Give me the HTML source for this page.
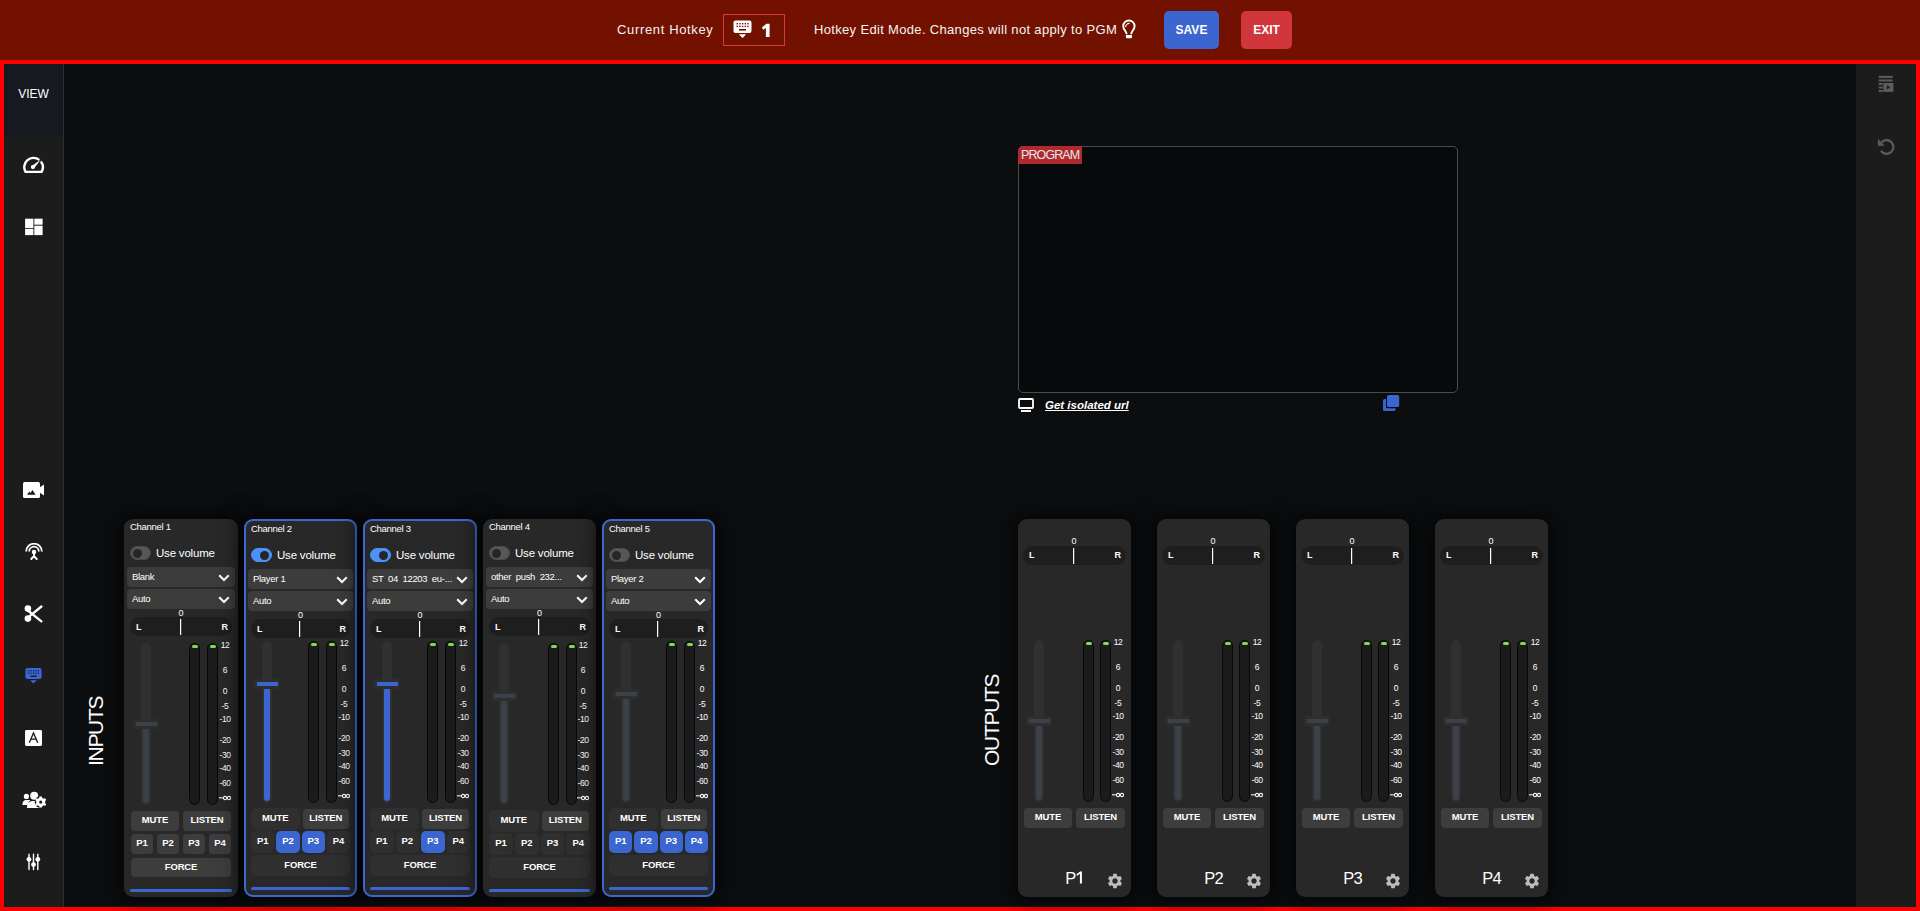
<!DOCTYPE html>
<html><head><meta charset="utf-8"><title>Hotkey edit</title><style>
*{margin:0;padding:0;box-sizing:border-box}
html,body{width:1920px;height:911px;overflow:hidden;background:#0b0d0f;font-family:"Liberation Sans", sans-serif;color:#fff}
.abs{position:absolute}
#top{position:absolute;left:0;top:0;width:1920px;height:60px;background:#721100}
#frame{position:absolute;left:0;top:60px;width:1920px;height:851px;border:4px solid #ff0000;background:#0b0d0f}
#lsb{position:absolute;left:4px;top:64px;width:60px;height:843px;background:#1c1c1c;border-right:1px solid #2f2f2f}
#view{position:absolute;left:0;top:0;width:59px;height:72px;background:#161a20;font-size:12px;text-align:center;line-height:60px}
#rsb{position:absolute;left:1856px;top:64px;width:60px;height:843px;background:#1c1c1c}
.card{position:absolute;background:#282828;border-radius:9px;box-shadow:0 0 20px 5px rgba(0,0,0,0.6)}
.card>*{position:absolute}
.card>.bd{left:0;top:0;width:100%;height:100%;border-radius:9px}
.clabel{font-size:9.5px;line-height:12px;color:#fff;letter-spacing:-0.3px}
.tog{width:21px;height:14px;border-radius:7px;background:#575757;border:1px solid #4a4a4a}
.tog i{position:absolute;left:2px;top:2px;width:9px;height:9px;border-radius:50%;background:#262626}
.tog.on{background:#4b92f8;border-color:#4b92f8}
.tog.on i{left:8px}
.usev{font-size:11.5px;line-height:14px;color:#fff;letter-spacing:-0.2px}
.sel{height:20px;background:#3c3c3c;border-radius:4px}
.sel>span{position:absolute;left:5px;top:4px;font-size:9.5px;line-height:12px;letter-spacing:-0.3px;white-space:nowrap}
.sel .chev{position:absolute;right:5px;top:7px}
.pan0{text-align:center;font-size:9px;line-height:10px}
.pan{height:19px;background:#1e1e1e;border-radius:10px}
.pan b{position:absolute;top:5px;font-size:9px;line-height:10px}
.pan .pl{left:6px} .pan .pr{right:4px}
.pan i{position:absolute;top:2px;width:1px;height:16px;background:#fff;box-shadow:0.4px 0 0 rgba(255,255,255,0.5)}
.ftrack{width:10px;background:#303030;border-radius:5px}
.ffill{width:6px;border-radius:0 0 3px 3px}
.fhandle{width:26px;height:10px;background:#2e2e2e;border-radius:3px}
.fhandle i{position:absolute;left:2.5px;top:2.5px;width:21px;height:4.5px}
.meter{width:11px;background:#1b1b1b;border-radius:6px;border:1px solid #080808}
.meter i{position:absolute;left:1.5px;top:1px;width:6.5px;height:3.2px;border-radius:2px;background:#7ddc55}
.scl{font-size:8.5px;line-height:10px;width:20px;text-align:center;letter-spacing:-0.4px}
.scl .dash{display:inline-block;width:3.5px;height:1.2px;background:#fff;vertical-align:3px;margin-right:0.5px}
.scl .inf{font-size:11px;line-height:10px;vertical-align:-0.5px}
.btn{height:20px;border-radius:4px;font-size:9.5px;font-weight:bold;line-height:18px;text-align:center;color:#fff;letter-spacing:-0.15px}
.bbar{height:3px;background:#3b66d0;border-radius:2px}
.oname{text-align:center;font-size:16.5px;line-height:16px;letter-spacing:-0.8px}
.vlabel{position:absolute;font-size:21px;line-height:21px;transform:rotate(-90deg);transform-origin:0 0;white-space:nowrap;letter-spacing:-1.3px}
</style></head>
<body>

<div id="top">
<div class="abs" style="left:617px;top:22px;font-size:13px;line-height:16px;color:#f4f4f4;letter-spacing:0.65px">Current Hotkey</div>
<div class="abs" style="left:723px;top:14px;width:62px;height:32px;border:1px solid #d43a3f"></div>
<svg style="position:absolute;left:733px;top:20px" width="19" height="18" viewBox="0 0 19 18">
<rect x="0.5" y="0.5" width="18" height="12.5" rx="2" fill="#ffffff"/>
<g fill="#721100">
<rect x="3.5" y="3" width="1.4" height="1.4"/><rect x="6.2" y="3" width="1.4" height="1.4"/><rect x="8.9" y="3" width="1.4" height="1.4"/><rect x="11.6" y="3" width="1.4" height="1.4"/><rect x="14.3" y="3" width="1.4" height="1.4"/>
<rect x="3.5" y="5.7" width="1.4" height="1.4"/><rect x="6.2" y="5.7" width="1.4" height="1.4"/><rect x="8.9" y="5.7" width="1.4" height="1.4"/><rect x="11.6" y="5.7" width="1.4" height="1.4"/><rect x="14.3" y="5.7" width="1.4" height="1.4"/>
<rect x="6" y="9" width="7" height="1.6"/>
</g>
<path d="M5.8 14.2 L13.2 14.2 L9.5 18 Z" fill="#ffffff"/>
</svg>
<svg class="abs" style="left:761px;top:23px" width="10" height="15" viewBox="0 0 10 15"><path d="M8.6 0.8 V14 H4.9 V4.9 L2.2 6.8 L0.9 4.5 L5.4 0.8 Z" fill="#fff"/></svg>
<div class="abs" style="left:814px;top:22px;font-size:13px;line-height:16px;color:#f4f4f4;letter-spacing:0.33px">Hotkey Edit Mode. Changes will not apply to PGM</div>
<svg class="abs" style="left:1122px;top:19px" width="14" height="20" viewBox="0 0 14 20">
<path d="M4.7 15.2 C4.7 12.6 1.2 10.6 1.2 7.2 A5.7 5.7 0 0 1 12.6 7.2 C12.6 10.6 9.1 12.6 9.1 15.2" fill="none" stroke="#fff" stroke-width="1.9"/>
<path d="M3.6 8.0 A3.9 3.9 0 0 1 7.6 4.3" fill="none" stroke="#fff" stroke-width="1.2"/>
<path d="M3.9 16 H10 V18.2 Q10 19.3 8.9 19.3 H5 Q3.9 19.3 3.9 18.2 Z" fill="#fff"/>
</svg>
<div class="abs" style="left:1164px;top:11px;width:55px;height:38px;border-radius:5px;background:#3c66cf;font-size:12px;font-weight:bold;line-height:38px;text-align:center">SAVE</div>
<div class="abs" style="left:1241px;top:11px;width:51px;height:38px;border-radius:5px;background:#d0363b;font-size:12px;font-weight:bold;line-height:38px;text-align:center">EXIT</div>
</div>

<div id="frame"></div>

<div id="lsb">
<div id="view">VIEW</div>
<!-- speedometer -->
<svg class="abs" style="left:18px;top:92px" width="24" height="18" viewBox="0 0 24 18">
<path d="M17.28 3.87 A9.3 9.3 0 0 0 3.53 15.9 L19.57 15.9 A9.3 9.3 0 0 0 18.88 5.47" fill="none" stroke="#fff" stroke-width="2.4" stroke-linejoin="round"/>
<path d="M12.1 12.3 L9.7 9.9 L18.6 3.7 Z" fill="#fff"/><circle cx="10.9" cy="11.1" r="2.1" fill="#fff"/>
</svg>
<!-- dashboard -->
<svg class="abs" style="left:21px;top:154px" width="18" height="18" viewBox="0 0 18 18">
<rect x="0.1" y="0.7" width="8.3" height="9.4" fill="#fff"/><rect x="0.1" y="10.9" width="8.3" height="6.2" fill="#fff"/>
<rect x="9.3" y="0.7" width="8.3" height="6" fill="#fff"/><rect x="9.3" y="7.7" width="8.3" height="9.4" fill="#fff"/>
</svg>
<!-- camera -->
<svg class="abs" style="left:19px;top:418px" width="22" height="17" viewBox="0 0 22 17">
<rect x="0" y="0" width="17" height="16" rx="1.6" fill="#fff"/>
<path d="M16.5 5.5 L21 2.5 L21 13.5 L16.5 10.5 Z" fill="#fff"/>
<path d="M4 12.8 L6.3 9.5 L7.4 10.9 L9.5 8 L12.6 12.8 Z" fill="#1c1c1c"/>
</svg>
<!-- antenna -->
<svg class="abs" style="left:21px;top:479px" width="18" height="17" viewBox="0 0 18 17">
<path d="M1.2 8.5 A7.8 7.8 0 0 1 16.8 8.5" fill="none" stroke="#fff" stroke-width="1.8"/>
<path d="M4.2 8.5 A4.8 4.8 0 0 1 13.8 8.5" fill="none" stroke="#fff" stroke-width="1.8"/>
<circle cx="9" cy="9" r="2.2" fill="#fff"/>
<path d="M9 9 L9 13 L6.3 16 M9 13 L11.7 16" fill="none" stroke="#fff" stroke-width="1.9" stroke-linecap="round"/>
</svg>
<!-- scissors -->
<svg class="abs" style="left:20px;top:541px" width="19" height="18" viewBox="0 0 19 18">
<circle cx="3.9" cy="3.6" r="3.3" fill="#fff"/><circle cx="3.9" cy="13.6" r="3.3" fill="#fff"/>
<path d="M4.5 6 L17.4 16.3 M6 10.8 L17.4 1.5" stroke="#fff" stroke-width="2.3" stroke-linecap="round"/>
</svg>
<!-- keyboard blue -->
<svg style="position:absolute;left:21px;top:603px" width="17" height="17" viewBox="0 0 19 18">
<rect x="0.5" y="0.5" width="18" height="12.5" rx="2" fill="#3b66d8"/>
<g fill="#1c1c1c">
<rect x="3.5" y="3" width="1.4" height="1.4"/><rect x="6.2" y="3" width="1.4" height="1.4"/><rect x="8.9" y="3" width="1.4" height="1.4"/><rect x="11.6" y="3" width="1.4" height="1.4"/><rect x="14.3" y="3" width="1.4" height="1.4"/>
<rect x="3.5" y="5.7" width="1.4" height="1.4"/><rect x="6.2" y="5.7" width="1.4" height="1.4"/><rect x="8.9" y="5.7" width="1.4" height="1.4"/><rect x="11.6" y="5.7" width="1.4" height="1.4"/><rect x="14.3" y="5.7" width="1.4" height="1.4"/>
<rect x="6" y="9" width="7" height="1.6"/>
</g>
<path d="M5.8 14.2 L13.2 14.2 L9.5 18 Z" fill="#3b66d8"/>
</svg>
<!-- A box -->
<svg class="abs" style="left:21px;top:666px" width="17" height="16" viewBox="0 0 17 16">
<rect x="0" y="0" width="17" height="16" rx="1.4" fill="#fff"/>
<path d="M4.3 12.8 L8.5 3 L12.7 12.8 M6 9.2 L11 9.2" fill="none" stroke="#1c1c1c" stroke-width="1.3"/>
</svg>
<!-- users cog -->
<svg class="abs" style="left:18px;top:727px" width="26" height="19" viewBox="0 0 26 19">
<circle cx="4.4" cy="5.4" r="2.6" fill="#fff"/>
<path d="M0.4 14 Q0.4 9 4.5 9 L8.5 9 Q5.5 11 5.6 14 Z" fill="#fff"/>
<circle cx="12.2" cy="4.7" r="4.0" fill="#fff"/>
<path d="M4.9 17 Q4.9 9.9 10.6 9.9 L14 9.9 Q17.5 10.2 17.5 17 Z" fill="#fff"/>
<g transform="translate(18.7 11.1) scale(1.2)"><circle r="5" fill="#1c1c1c"/>
<path d="M-1 -4.6 L1 -4.6 L1.3 -3.4 L2.6 -2.7 L3.7 -3.3 L4.6 -1.8 L3.7 -0.9 L3.7 0.9 L4.6 1.8 L3.7 3.3 L2.6 2.7 L1.3 3.4 L1 4.6 L-1 4.6 L-1.3 3.4 L-2.6 2.7 L-3.7 3.3 L-4.6 1.8 L-3.7 0.9 L-3.7 -0.9 L-4.6 -1.8 L-3.7 -3.3 L-2.6 -2.7 L-1.3 -3.4 Z" fill="#fff"/>
<circle r="1.3" fill="#1c1c1c"/></g>
</svg>
<!-- sliders -->
<svg class="abs" style="left:22px;top:789px" width="15" height="18" viewBox="0 0 15 18">
<path d="M3.0 1.2 V16.6 M7.5 1.2 V16.6 M11.8 1.2 V16.6" stroke="#fff" stroke-width="1.4" stroke-linecap="round"/>
<circle cx="3.0" cy="6.3" r="2.4" fill="#fff"/><circle cx="7.5" cy="11.6" r="2.4" fill="#fff"/><circle cx="11.8" cy="6.3" r="2.4" fill="#fff"/>
</svg>
</div>
<div id="rsb">
<svg class="abs" style="left:22px;top:11px" width="16" height="18" viewBox="0 0 16 18">
<rect x="0.7" y="0.9" width="14" height="2" fill="#5c5c5c"/><rect x="0.7" y="4.5" width="14" height="2" fill="#5c5c5c"/>
<rect x="0.7" y="8.0" width="4" height="2" fill="#5c5c5c"/><rect x="0.7" y="11.5" width="4" height="2" fill="#5c5c5c"/><rect x="0.7" y="15.0" width="4" height="2" fill="#5c5c5c"/>
<rect x="5.3" y="8.0" width="10.1" height="8.9" fill="#5c5c5c"/><path d="M8.9 10.3 L12.2 12.45 L8.9 14.6 Z" fill="#1c1c1c"/>
</svg>
<svg class="abs" style="left:21px;top:74px" width="19" height="18" viewBox="0 0 19 18">
<path d="M4.39 4.63 A6.8 6.8 0 1 1 4.03 12.9" fill="none" stroke="#5c5c5c" stroke-width="2.3"/>
<path d="M0.9 0.9 L0.9 7.8 L7.8 7.8 Z" fill="#5c5c5c"/>
</svg>
</div>


<div class="abs" style="left:1018px;top:146px;width:440px;height:247px;border:1px solid #4b4b4b;border-radius:5px;background:#060a0b"></div>
<div class="abs" style="left:1018px;top:146px;width:64px;height:18px;background:#b0292f;border-radius:5px 0 0 0;font-size:12.5px;line-height:18px;color:#e6e6e6;padding-left:3px;letter-spacing:-0.9px">PROGRAM</div>
<svg class="abs" style="left:1018px;top:398px" width="16" height="14" viewBox="0 0 16 14">
<rect x="1" y="1" width="14" height="9" rx="1" fill="none" stroke="#fff" stroke-width="1.8"/>
<rect x="3" y="12" width="10" height="2" fill="#fff"/>
</svg>
<div class="abs" style="left:1045px;top:397.5px;font-size:11.5px;line-height:14px;font-weight:bold;font-style:italic;text-decoration:underline;letter-spacing:0px">Get isolated url</div>
<svg class="abs" style="left:1383px;top:395px" width="17" height="17" viewBox="0 0 17 17">
<rect x="0" y="4" width="12.5" height="12" rx="1.5" fill="#3b66d0"/>
<rect x="3" y="-0.2" width="14" height="13.4" rx="1.5" fill="#0b0d0f"/>
<rect x="4" y="0" width="12.2" height="12" rx="1.5" fill="#3b66d0"/>
</svg>


<div class="vlabel" style="left:84.5px;top:766px">INPUTS</div>
<div class="vlabel" style="left:981px;top:766px">OUTPUTS</div>

<div class="card" style="left:124px;top:519px;width:114px;height:378px"><div class="bd" style=""></div>
<div class="clabel" style="left:6px;top:2px">Channel 1</div>
<div class="tog" style="left:6px;top:27px"><i></i></div>
<div class="usev" style="left:32px;top:26.5px">Use volume</div>
<div class="sel" style="left:3px;top:48px;width:108px"><span>Blank</span><svg class="chev" width="12" height="8" viewBox="0 0 12 8"><path d="M1.2 1.2 L6 6 L10.8 1.2" stroke="#fff" stroke-width="2.1" fill="none"/></svg></div>
<div class="sel" style="left:3px;top:70px;width:108px"><span>Auto</span><svg class="chev" width="12" height="8" viewBox="0 0 12 8"><path d="M1.2 1.2 L6 6 L10.8 1.2" stroke="#fff" stroke-width="2.1" fill="none"/></svg></div>
<div class="pan0" style="left:0;width:114px;top:89px">0</div>
<div class="pan" style="left:6px;top:98px;width:102px"><b class="pl">L</b><b class="pr">R</b><i style="left:50px"></i></div>
<div class="ftrack" style="left:17px;top:124px;height:162px"></div>
<div class="ffill" style="left:19px;top:209px;height:75px;background:#3c4048"></div>
<div class="fhandle" style="left:9px;top:200px"><i style="background:#3c4048"></i></div>
<div class="meter" style="left:65px;top:124px;height:162px"><i></i></div>
<div class="meter" style="left:83px;top:124px;height:162px"><i></i></div>
<div class="scl" style="left:91px;top:121.1px">12</div>
<div class="scl" style="left:91px;top:146.0px">6</div>
<div class="scl" style="left:91px;top:167.0px">0</div>
<div class="scl" style="left:91px;top:182.3px">-5</div>
<div class="scl" style="left:91px;top:195.3px">-10</div>
<div class="scl" style="left:91px;top:216.0px">-20</div>
<div class="scl" style="left:91px;top:231.3px">-30</div>
<div class="scl" style="left:91px;top:243.5px">-40</div>
<div class="scl" style="left:91px;top:258.8px">-60</div>
<svg style="left:95px;top:276px" width="13" height="6" viewBox="0 0 13 6"><rect x="0" y="2.3" width="3.8" height="1.05" fill="#fff"/><circle cx="6" cy="3" r="1.65" fill="none" stroke="#fff" stroke-width="1.05"/><circle cx="9.9" cy="3" r="1.65" fill="none" stroke="#fff" stroke-width="1.05"/></svg>
<div class="btn" style="left:7px;top:292px;width:48.0px;height:20px;line-height:18px;background:#3d3d3d;">MUTE</div>
<div class="btn" style="left:59.0px;top:292px;width:48.0px;background:#3d3d3d">LISTEN</div>
<div class="btn" style="left:7.0px;top:315px;width:22.0px;height:20px;line-height:18px;background:#3d3d3d;">P1</div>
<div class="btn" style="left:33.0px;top:315px;width:22.0px;height:20px;line-height:18px;background:#3d3d3d;">P2</div>
<div class="btn" style="left:59.0px;top:315px;width:22.0px;height:20px;line-height:18px;background:#3d3d3d;">P3</div>
<div class="btn" style="left:85.0px;top:315px;width:22.0px;height:20px;line-height:18px;background:#3d3d3d;">P4</div>
<div class="btn" style="left:7px;top:339px;width:100px;height:19px;line-height:17px;background:#3d3d3d;">FORCE</div>
<div class="bbar" style="left:6px;top:370px;width:102px"></div>
</div><div class="card" style="left:244px;top:519px;width:113px;height:378px"><div class="bd" style="border:2px solid #3c66d0;"></div>
<div class="clabel" style="left:7px;top:4px">Channel 2</div>
<div class="tog on" style="left:7px;top:29px"><i></i></div>
<div class="usev" style="left:33px;top:28.5px">Use volume</div>
<div class="sel" style="left:4px;top:50px;width:105px"><span>Player 1</span><svg class="chev" width="12" height="8" viewBox="0 0 12 8"><path d="M1.2 1.2 L6 6 L10.8 1.2" stroke="#fff" stroke-width="2.1" fill="none"/></svg></div>
<div class="sel" style="left:4px;top:72px;width:105px"><span>Auto</span><svg class="chev" width="12" height="8" viewBox="0 0 12 8"><path d="M1.2 1.2 L6 6 L10.8 1.2" stroke="#fff" stroke-width="2.1" fill="none"/></svg></div>
<div class="pan0" style="left:0;width:113px;top:91px">0</div>
<div class="pan" style="left:7px;top:100px;width:99px"><b class="pl">L</b><b class="pr">R</b><i style="left:48px"></i></div>
<div class="ftrack" style="left:18px;top:122px;height:162px"></div>
<div class="ffill" style="left:20px;top:169px;height:113px;background:#3b66d0"></div>
<div class="fhandle" style="left:10px;top:160px"><i style="background:#3b66d0"></i></div>
<div class="meter" style="left:64px;top:122px;height:162px"><i></i></div>
<div class="meter" style="left:82px;top:122px;height:162px"><i></i></div>
<div class="scl" style="left:90px;top:119.1px">12</div>
<div class="scl" style="left:90px;top:144.0px">6</div>
<div class="scl" style="left:90px;top:165.0px">0</div>
<div class="scl" style="left:90px;top:180.3px">-5</div>
<div class="scl" style="left:90px;top:193.3px">-10</div>
<div class="scl" style="left:90px;top:214.0px">-20</div>
<div class="scl" style="left:90px;top:229.3px">-30</div>
<div class="scl" style="left:90px;top:241.5px">-40</div>
<div class="scl" style="left:90px;top:256.8px">-60</div>
<svg style="left:94px;top:274px" width="13" height="6" viewBox="0 0 13 6"><rect x="0" y="2.3" width="3.8" height="1.05" fill="#fff"/><circle cx="6" cy="3" r="1.65" fill="none" stroke="#fff" stroke-width="1.05"/><circle cx="9.9" cy="3" r="1.65" fill="none" stroke="#fff" stroke-width="1.05"/></svg>
<div class="btn" style="left:8px;top:290px;width:46.5px;height:20px;line-height:18px;background:#2f2f2f;box-shadow:0 0 0 1px #2f2f2f;">MUTE</div>
<div class="btn" style="left:58.5px;top:290px;width:46.5px;background:#3d3d3d">LISTEN</div>
<div class="btn" style="left:8.0px;top:313px;width:21.25px;height:20px;line-height:18px;background:#2f2f2f;box-shadow:0 0 0 1px #2f2f2f;">P1</div>
<div class="btn" style="left:33.25px;top:313px;width:21.25px;height:20px;line-height:18px;background:#3b66d0;box-shadow:0 0 0 1px #3b66d0;">P2</div>
<div class="btn" style="left:58.5px;top:313px;width:21.25px;height:20px;line-height:18px;background:#3b66d0;box-shadow:0 0 0 1px #3b66d0;">P3</div>
<div class="btn" style="left:83.75px;top:313px;width:21.25px;height:20px;line-height:18px;background:#2f2f2f;box-shadow:0 0 0 1px #2f2f2f;">P4</div>
<div class="btn" style="left:8px;top:337px;width:97px;height:19px;line-height:17px;background:#2f2f2f;box-shadow:0 0 0 1px #2f2f2f;">FORCE</div>
<div class="bbar" style="left:7px;top:368px;width:99px"></div>
</div><div class="card" style="left:363px;top:519px;width:114px;height:378px"><div class="bd" style="border:2px solid #3c66d0;"></div>
<div class="clabel" style="left:7px;top:4px">Channel 3</div>
<div class="tog on" style="left:7px;top:29px"><i></i></div>
<div class="usev" style="left:33px;top:28.5px">Use volume</div>
<div class="sel" style="left:4px;top:50px;width:106px"><span><span style="word-spacing:2.2px">ST 04 12203 eu-...</span></span><svg class="chev" width="12" height="8" viewBox="0 0 12 8"><path d="M1.2 1.2 L6 6 L10.8 1.2" stroke="#fff" stroke-width="2.1" fill="none"/></svg></div>
<div class="sel" style="left:4px;top:72px;width:106px"><span>Auto</span><svg class="chev" width="12" height="8" viewBox="0 0 12 8"><path d="M1.2 1.2 L6 6 L10.8 1.2" stroke="#fff" stroke-width="2.1" fill="none"/></svg></div>
<div class="pan0" style="left:0;width:114px;top:91px">0</div>
<div class="pan" style="left:7px;top:100px;width:100px"><b class="pl">L</b><b class="pr">R</b><i style="left:49px"></i></div>
<div class="ftrack" style="left:19px;top:122px;height:162px"></div>
<div class="ffill" style="left:21px;top:169px;height:113px;background:#3b66d0"></div>
<div class="fhandle" style="left:11px;top:160px"><i style="background:#3b66d0"></i></div>
<div class="meter" style="left:64px;top:122px;height:162px"><i></i></div>
<div class="meter" style="left:82px;top:122px;height:162px"><i></i></div>
<div class="scl" style="left:90px;top:119.1px">12</div>
<div class="scl" style="left:90px;top:144.0px">6</div>
<div class="scl" style="left:90px;top:165.0px">0</div>
<div class="scl" style="left:90px;top:180.3px">-5</div>
<div class="scl" style="left:90px;top:193.3px">-10</div>
<div class="scl" style="left:90px;top:214.0px">-20</div>
<div class="scl" style="left:90px;top:229.3px">-30</div>
<div class="scl" style="left:90px;top:241.5px">-40</div>
<div class="scl" style="left:90px;top:256.8px">-60</div>
<svg style="left:94px;top:274px" width="13" height="6" viewBox="0 0 13 6"><rect x="0" y="2.3" width="3.8" height="1.05" fill="#fff"/><circle cx="6" cy="3" r="1.65" fill="none" stroke="#fff" stroke-width="1.05"/><circle cx="9.9" cy="3" r="1.65" fill="none" stroke="#fff" stroke-width="1.05"/></svg>
<div class="btn" style="left:8px;top:290px;width:47.0px;height:20px;line-height:18px;background:#2f2f2f;box-shadow:0 0 0 1px #2f2f2f;">MUTE</div>
<div class="btn" style="left:59.0px;top:290px;width:47.0px;background:#3d3d3d">LISTEN</div>
<div class="btn" style="left:8.0px;top:313px;width:21.5px;height:20px;line-height:18px;background:#2f2f2f;box-shadow:0 0 0 1px #2f2f2f;">P1</div>
<div class="btn" style="left:33.5px;top:313px;width:21.5px;height:20px;line-height:18px;background:#2f2f2f;box-shadow:0 0 0 1px #2f2f2f;">P2</div>
<div class="btn" style="left:59.0px;top:313px;width:21.5px;height:20px;line-height:18px;background:#3b66d0;box-shadow:0 0 0 1px #3b66d0;">P3</div>
<div class="btn" style="left:84.5px;top:313px;width:21.5px;height:20px;line-height:18px;background:#2f2f2f;box-shadow:0 0 0 1px #2f2f2f;">P4</div>
<div class="btn" style="left:8px;top:337px;width:98px;height:19px;line-height:17px;background:#2f2f2f;box-shadow:0 0 0 1px #2f2f2f;">FORCE</div>
<div class="bbar" style="left:7px;top:368px;width:100px"></div>
</div><div class="card" style="left:483px;top:519px;width:113px;height:378px"><div class="bd" style=""></div>
<div class="clabel" style="left:6px;top:2px">Channel 4</div>
<div class="tog" style="left:6px;top:27px"><i></i></div>
<div class="usev" style="left:32px;top:26.5px">Use volume</div>
<div class="sel" style="left:3px;top:48px;width:107px"><span><span style="word-spacing:2.2px">other push 232...</span></span><svg class="chev" width="12" height="8" viewBox="0 0 12 8"><path d="M1.2 1.2 L6 6 L10.8 1.2" stroke="#fff" stroke-width="2.1" fill="none"/></svg></div>
<div class="sel" style="left:3px;top:70px;width:107px"><span>Auto</span><svg class="chev" width="12" height="8" viewBox="0 0 12 8"><path d="M1.2 1.2 L6 6 L10.8 1.2" stroke="#fff" stroke-width="2.1" fill="none"/></svg></div>
<div class="pan0" style="left:0;width:113px;top:89px">0</div>
<div class="pan" style="left:6px;top:98px;width:101px"><b class="pl">L</b><b class="pr">R</b><i style="left:49px"></i></div>
<div class="ftrack" style="left:16px;top:124px;height:162px"></div>
<div class="ffill" style="left:18px;top:181px;height:103px;background:#3c4048"></div>
<div class="fhandle" style="left:8px;top:172px"><i style="background:#3c4048"></i></div>
<div class="meter" style="left:65px;top:124px;height:162px"><i></i></div>
<div class="meter" style="left:83px;top:124px;height:162px"><i></i></div>
<div class="scl" style="left:90px;top:121.1px">12</div>
<div class="scl" style="left:90px;top:146.0px">6</div>
<div class="scl" style="left:90px;top:167.0px">0</div>
<div class="scl" style="left:90px;top:182.3px">-5</div>
<div class="scl" style="left:90px;top:195.3px">-10</div>
<div class="scl" style="left:90px;top:216.0px">-20</div>
<div class="scl" style="left:90px;top:231.3px">-30</div>
<div class="scl" style="left:90px;top:243.5px">-40</div>
<div class="scl" style="left:90px;top:258.8px">-60</div>
<svg style="left:94px;top:276px" width="13" height="6" viewBox="0 0 13 6"><rect x="0" y="2.3" width="3.8" height="1.05" fill="#fff"/><circle cx="6" cy="3" r="1.65" fill="none" stroke="#fff" stroke-width="1.05"/><circle cx="9.9" cy="3" r="1.65" fill="none" stroke="#fff" stroke-width="1.05"/></svg>
<div class="btn" style="left:7px;top:292px;width:47.5px;height:20px;line-height:18px;background:#2f2f2f;box-shadow:0 0 0 1px #2f2f2f;">MUTE</div>
<div class="btn" style="left:58.5px;top:292px;width:47.5px;background:#3d3d3d">LISTEN</div>
<div class="btn" style="left:7.0px;top:315px;width:21.75px;height:20px;line-height:18px;background:#2f2f2f;box-shadow:0 0 0 1px #2f2f2f;">P1</div>
<div class="btn" style="left:32.75px;top:315px;width:21.75px;height:20px;line-height:18px;background:#2f2f2f;box-shadow:0 0 0 1px #2f2f2f;">P2</div>
<div class="btn" style="left:58.5px;top:315px;width:21.75px;height:20px;line-height:18px;background:#2f2f2f;box-shadow:0 0 0 1px #2f2f2f;">P3</div>
<div class="btn" style="left:84.25px;top:315px;width:21.75px;height:20px;line-height:18px;background:#2f2f2f;box-shadow:0 0 0 1px #2f2f2f;">P4</div>
<div class="btn" style="left:7px;top:339px;width:99px;height:19px;line-height:17px;background:#2f2f2f;box-shadow:0 0 0 1px #2f2f2f;">FORCE</div>
<div class="bbar" style="left:6px;top:370px;width:101px"></div>
</div><div class="card" style="left:602px;top:519px;width:113px;height:378px"><div class="bd" style="border:2px solid #3c66d0;"></div>
<div class="clabel" style="left:7px;top:4px">Channel 5</div>
<div class="tog" style="left:7px;top:29px"><i></i></div>
<div class="usev" style="left:33px;top:28.5px">Use volume</div>
<div class="sel" style="left:4px;top:50px;width:105px"><span>Player 2</span><svg class="chev" width="12" height="8" viewBox="0 0 12 8"><path d="M1.2 1.2 L6 6 L10.8 1.2" stroke="#fff" stroke-width="2.1" fill="none"/></svg></div>
<div class="sel" style="left:4px;top:72px;width:105px"><span>Auto</span><svg class="chev" width="12" height="8" viewBox="0 0 12 8"><path d="M1.2 1.2 L6 6 L10.8 1.2" stroke="#fff" stroke-width="2.1" fill="none"/></svg></div>
<div class="pan0" style="left:0;width:113px;top:91px">0</div>
<div class="pan" style="left:7px;top:100px;width:99px"><b class="pl">L</b><b class="pr">R</b><i style="left:48px"></i></div>
<div class="ftrack" style="left:19px;top:122px;height:162px"></div>
<div class="ffill" style="left:21px;top:179px;height:103px;background:#3c4048"></div>
<div class="fhandle" style="left:11px;top:170px"><i style="background:#3c4048"></i></div>
<div class="meter" style="left:64px;top:122px;height:162px"><i></i></div>
<div class="meter" style="left:82px;top:122px;height:162px"><i></i></div>
<div class="scl" style="left:90px;top:119.1px">12</div>
<div class="scl" style="left:90px;top:144.0px">6</div>
<div class="scl" style="left:90px;top:165.0px">0</div>
<div class="scl" style="left:90px;top:180.3px">-5</div>
<div class="scl" style="left:90px;top:193.3px">-10</div>
<div class="scl" style="left:90px;top:214.0px">-20</div>
<div class="scl" style="left:90px;top:229.3px">-30</div>
<div class="scl" style="left:90px;top:241.5px">-40</div>
<div class="scl" style="left:90px;top:256.8px">-60</div>
<svg style="left:94px;top:274px" width="13" height="6" viewBox="0 0 13 6"><rect x="0" y="2.3" width="3.8" height="1.05" fill="#fff"/><circle cx="6" cy="3" r="1.65" fill="none" stroke="#fff" stroke-width="1.05"/><circle cx="9.9" cy="3" r="1.65" fill="none" stroke="#fff" stroke-width="1.05"/></svg>
<div class="btn" style="left:8px;top:290px;width:46.5px;height:20px;line-height:18px;background:#2f2f2f;box-shadow:0 0 0 1px #2f2f2f;">MUTE</div>
<div class="btn" style="left:58.5px;top:290px;width:46.5px;background:#3d3d3d">LISTEN</div>
<div class="btn" style="left:8.0px;top:313px;width:21.25px;height:20px;line-height:18px;background:#3b66d0;box-shadow:0 0 0 1px #3b66d0;">P1</div>
<div class="btn" style="left:33.25px;top:313px;width:21.25px;height:20px;line-height:18px;background:#3b66d0;box-shadow:0 0 0 1px #3b66d0;">P2</div>
<div class="btn" style="left:58.5px;top:313px;width:21.25px;height:20px;line-height:18px;background:#3b66d0;box-shadow:0 0 0 1px #3b66d0;">P3</div>
<div class="btn" style="left:83.75px;top:313px;width:21.25px;height:20px;line-height:18px;background:#3b66d0;box-shadow:0 0 0 1px #3b66d0;">P4</div>
<div class="btn" style="left:8px;top:337px;width:97px;height:19px;line-height:17px;background:#2f2f2f;box-shadow:0 0 0 1px #2f2f2f;">FORCE</div>
<div class="bbar" style="left:7px;top:368px;width:99px"></div>
</div>
<div class="card" style="left:1018px;top:519px;width:113px;height:378px">
<div class="pan0" style="left:0;width:112px;top:17px">0</div>
<div class="pan" style="left:5px;top:27px;width:103px"><b class="pl" style="left:6px;top:3.5px">L</b><b class="pr" style="right:5px;top:3.5px">R</b><i style="left:50px"></i></div>
<div class="ftrack" style="left:16px;top:121px;height:162px"></div>
<div class="ffill" style="left:18px;top:206px;height:75px;background:#3c4048"></div>
<div class="fhandle" style="left:8px;top:197px"><i style="background:#3c4048"></i></div>
<div class="meter" style="left:65px;top:121px;height:162px"><i></i></div>
<div class="meter" style="left:82px;top:121px;height:162px"><i></i></div>
<div class="scl" style="left:90px;top:118.1px">12</div>
<div class="scl" style="left:90px;top:143.0px">6</div>
<div class="scl" style="left:90px;top:164.0px">0</div>
<div class="scl" style="left:90px;top:179.3px">-5</div>
<div class="scl" style="left:90px;top:192.3px">-10</div>
<div class="scl" style="left:90px;top:213.0px">-20</div>
<div class="scl" style="left:90px;top:228.3px">-30</div>
<div class="scl" style="left:90px;top:240.5px">-40</div>
<div class="scl" style="left:90px;top:255.8px">-60</div>
<svg style="left:94px;top:273px" width="13" height="6" viewBox="0 0 13 6"><rect x="0" y="2.3" width="3.8" height="1.05" fill="#fff"/><circle cx="6" cy="3" r="1.65" fill="none" stroke="#fff" stroke-width="1.05"/><circle cx="9.9" cy="3" r="1.65" fill="none" stroke="#fff" stroke-width="1.05"/></svg>
<div class="btn" style="left:6px;top:289px;width:48px;background:#3d3d3d">MUTE</div>
<div class="btn" style="left:58px;top:289px;width:49px;background:#3d3d3d">LISTEN</div>
<div class="oname" style="left:47.3px;width:12px;top:351px;text-align:left">P</div>
<svg style="left:57px;top:351.5px" width="8" height="13" viewBox="0 0 8 13"><path d="M6.9 0.4 V12.5 H4.9 V2.8 L2.2 4.8 L1.2 3.4 L5.1 0.4 Z" fill="#fff"/></svg>
<svg style="position:absolute;left:87.6px;top:353px" width="18" height="18" viewBox="0 0 24 24"><path fill="#bdbdbd" d="M19.14 12.94c.04-.3.06-.61.06-.94 0-.32-.02-.64-.07-.94l2.03-1.58a.49.49 0 0 0 .12-.61l-1.92-3.32a.49.49 0 0 0-.59-.22l-2.39.96c-.5-.38-1.03-.7-1.62-.94l-.36-2.54a.48.48 0 0 0-.48-.41h-3.84c-.24 0-.43.17-.47.41l-.36 2.54c-.59.24-1.130.57-1.62.94l-2.39-.96a.48.48 0 0 0-.59.22L2.74 8.87c-.12.21-.08.47.12.61l2.03 1.58c-.05.3-.09.63-.09.94s.02.64.07.94l-2.03 1.58a.49.49 0 0 0-.12.61l1.92 3.32c.12.22.37.29.59.22l2.39-.96c.5.38 1.03.7 1.62.94l.36 2.54c.05.24.24.41.48.41h3.84c.24 0 .44-.17.47-.41l.36-2.54c.59-.24 1.13-.56 1.62-.94l2.39.96c.22.08.47 0 .59-.22l1.920-3.32c.12-.22.07-.47-.12-.61l-2.01-1.58zM12 15.6c-1.98 0-3.6-1.62-3.6-3.6s1.62-3.6 3.6-3.6 3.6 1.62 3.6 3.6-1.62 3.6-3.6 3.6z"/></svg>
</div><div class="card" style="left:1157px;top:519px;width:113px;height:378px">
<div class="pan0" style="left:0;width:112px;top:17px">0</div>
<div class="pan" style="left:5px;top:27px;width:103px"><b class="pl" style="left:6px;top:3.5px">L</b><b class="pr" style="right:5px;top:3.5px">R</b><i style="left:50px"></i></div>
<div class="ftrack" style="left:16px;top:121px;height:162px"></div>
<div class="ffill" style="left:18px;top:206px;height:75px;background:#3c4048"></div>
<div class="fhandle" style="left:8px;top:197px"><i style="background:#3c4048"></i></div>
<div class="meter" style="left:65px;top:121px;height:162px"><i></i></div>
<div class="meter" style="left:82px;top:121px;height:162px"><i></i></div>
<div class="scl" style="left:90px;top:118.1px">12</div>
<div class="scl" style="left:90px;top:143.0px">6</div>
<div class="scl" style="left:90px;top:164.0px">0</div>
<div class="scl" style="left:90px;top:179.3px">-5</div>
<div class="scl" style="left:90px;top:192.3px">-10</div>
<div class="scl" style="left:90px;top:213.0px">-20</div>
<div class="scl" style="left:90px;top:228.3px">-30</div>
<div class="scl" style="left:90px;top:240.5px">-40</div>
<div class="scl" style="left:90px;top:255.8px">-60</div>
<svg style="left:94px;top:273px" width="13" height="6" viewBox="0 0 13 6"><rect x="0" y="2.3" width="3.8" height="1.05" fill="#fff"/><circle cx="6" cy="3" r="1.65" fill="none" stroke="#fff" stroke-width="1.05"/><circle cx="9.9" cy="3" r="1.65" fill="none" stroke="#fff" stroke-width="1.05"/></svg>
<div class="btn" style="left:6px;top:289px;width:48px;background:#3d3d3d">MUTE</div>
<div class="btn" style="left:58px;top:289px;width:49px;background:#3d3d3d">LISTEN</div>
<div class="oname" style="left:2px;width:109px;top:351px">P2</div>
<svg style="position:absolute;left:87.6px;top:353px" width="18" height="18" viewBox="0 0 24 24"><path fill="#bdbdbd" d="M19.14 12.94c.04-.3.06-.61.06-.94 0-.32-.02-.64-.07-.94l2.03-1.58a.49.49 0 0 0 .12-.61l-1.92-3.32a.49.49 0 0 0-.59-.22l-2.39.96c-.5-.38-1.03-.7-1.62-.94l-.36-2.54a.48.48 0 0 0-.48-.41h-3.84c-.24 0-.43.17-.47.41l-.36 2.54c-.59.24-1.130.57-1.62.94l-2.39-.96a.48.48 0 0 0-.59.22L2.74 8.87c-.12.21-.08.47.12.61l2.03 1.58c-.05.3-.09.63-.09.94s.02.64.07.94l-2.03 1.58a.49.49 0 0 0-.12.61l1.92 3.32c.12.22.37.29.59.22l2.39-.96c.5.38 1.03.7 1.62.94l.36 2.54c.05.24.24.41.48.41h3.84c.24 0 .44-.17.47-.41l.36-2.54c.59-.24 1.13-.56 1.62-.94l2.39.96c.22.08.47 0 .59-.22l1.920-3.32c.12-.22.07-.47-.12-.61l-2.01-1.58zM12 15.6c-1.98 0-3.6-1.62-3.6-3.6s1.62-3.6 3.6-3.6 3.6 1.62 3.6 3.6-1.62 3.6-3.6 3.6z"/></svg>
</div><div class="card" style="left:1296px;top:519px;width:113px;height:378px">
<div class="pan0" style="left:0;width:112px;top:17px">0</div>
<div class="pan" style="left:5px;top:27px;width:103px"><b class="pl" style="left:6px;top:3.5px">L</b><b class="pr" style="right:5px;top:3.5px">R</b><i style="left:50px"></i></div>
<div class="ftrack" style="left:16px;top:121px;height:162px"></div>
<div class="ffill" style="left:18px;top:206px;height:75px;background:#3c4048"></div>
<div class="fhandle" style="left:8px;top:197px"><i style="background:#3c4048"></i></div>
<div class="meter" style="left:65px;top:121px;height:162px"><i></i></div>
<div class="meter" style="left:82px;top:121px;height:162px"><i></i></div>
<div class="scl" style="left:90px;top:118.1px">12</div>
<div class="scl" style="left:90px;top:143.0px">6</div>
<div class="scl" style="left:90px;top:164.0px">0</div>
<div class="scl" style="left:90px;top:179.3px">-5</div>
<div class="scl" style="left:90px;top:192.3px">-10</div>
<div class="scl" style="left:90px;top:213.0px">-20</div>
<div class="scl" style="left:90px;top:228.3px">-30</div>
<div class="scl" style="left:90px;top:240.5px">-40</div>
<div class="scl" style="left:90px;top:255.8px">-60</div>
<svg style="left:94px;top:273px" width="13" height="6" viewBox="0 0 13 6"><rect x="0" y="2.3" width="3.8" height="1.05" fill="#fff"/><circle cx="6" cy="3" r="1.65" fill="none" stroke="#fff" stroke-width="1.05"/><circle cx="9.9" cy="3" r="1.65" fill="none" stroke="#fff" stroke-width="1.05"/></svg>
<div class="btn" style="left:6px;top:289px;width:48px;background:#3d3d3d">MUTE</div>
<div class="btn" style="left:58px;top:289px;width:49px;background:#3d3d3d">LISTEN</div>
<div class="oname" style="left:2px;width:109px;top:351px">P3</div>
<svg style="position:absolute;left:87.6px;top:353px" width="18" height="18" viewBox="0 0 24 24"><path fill="#bdbdbd" d="M19.14 12.94c.04-.3.06-.61.06-.94 0-.32-.02-.64-.07-.94l2.03-1.58a.49.49 0 0 0 .12-.61l-1.92-3.32a.49.49 0 0 0-.59-.22l-2.39.96c-.5-.38-1.03-.7-1.62-.94l-.36-2.54a.48.48 0 0 0-.48-.41h-3.84c-.24 0-.43.17-.47.41l-.36 2.54c-.59.24-1.130.57-1.62.94l-2.39-.96a.48.48 0 0 0-.59.22L2.74 8.87c-.12.21-.08.47.12.61l2.03 1.58c-.05.3-.09.63-.09.94s.02.64.07.94l-2.03 1.58a.49.49 0 0 0-.12.61l1.92 3.32c.12.22.37.29.59.22l2.39-.96c.5.38 1.03.7 1.62.94l.36 2.54c.05.24.24.41.48.41h3.84c.24 0 .44-.17.47-.41l.36-2.54c.59-.24 1.13-.56 1.62-.94l2.39.96c.22.08.47 0 .59-.22l1.920-3.32c.12-.22.07-.47-.12-.61l-2.01-1.58zM12 15.6c-1.98 0-3.6-1.62-3.6-3.6s1.62-3.6 3.6-3.6 3.6 1.62 3.6 3.6-1.62 3.6-3.6 3.6z"/></svg>
</div><div class="card" style="left:1435px;top:519px;width:113px;height:378px">
<div class="pan0" style="left:0;width:112px;top:17px">0</div>
<div class="pan" style="left:5px;top:27px;width:103px"><b class="pl" style="left:6px;top:3.5px">L</b><b class="pr" style="right:5px;top:3.5px">R</b><i style="left:50px"></i></div>
<div class="ftrack" style="left:16px;top:121px;height:162px"></div>
<div class="ffill" style="left:18px;top:206px;height:75px;background:#3c4048"></div>
<div class="fhandle" style="left:8px;top:197px"><i style="background:#3c4048"></i></div>
<div class="meter" style="left:65px;top:121px;height:162px"><i></i></div>
<div class="meter" style="left:82px;top:121px;height:162px"><i></i></div>
<div class="scl" style="left:90px;top:118.1px">12</div>
<div class="scl" style="left:90px;top:143.0px">6</div>
<div class="scl" style="left:90px;top:164.0px">0</div>
<div class="scl" style="left:90px;top:179.3px">-5</div>
<div class="scl" style="left:90px;top:192.3px">-10</div>
<div class="scl" style="left:90px;top:213.0px">-20</div>
<div class="scl" style="left:90px;top:228.3px">-30</div>
<div class="scl" style="left:90px;top:240.5px">-40</div>
<div class="scl" style="left:90px;top:255.8px">-60</div>
<svg style="left:94px;top:273px" width="13" height="6" viewBox="0 0 13 6"><rect x="0" y="2.3" width="3.8" height="1.05" fill="#fff"/><circle cx="6" cy="3" r="1.65" fill="none" stroke="#fff" stroke-width="1.05"/><circle cx="9.9" cy="3" r="1.65" fill="none" stroke="#fff" stroke-width="1.05"/></svg>
<div class="btn" style="left:6px;top:289px;width:48px;background:#3d3d3d">MUTE</div>
<div class="btn" style="left:58px;top:289px;width:49px;background:#3d3d3d">LISTEN</div>
<div class="oname" style="left:2px;width:109px;top:351px">P4</div>
<svg style="position:absolute;left:87.6px;top:353px" width="18" height="18" viewBox="0 0 24 24"><path fill="#bdbdbd" d="M19.14 12.94c.04-.3.06-.61.06-.94 0-.32-.02-.64-.07-.94l2.03-1.58a.49.49 0 0 0 .12-.61l-1.92-3.32a.49.49 0 0 0-.59-.22l-2.39.96c-.5-.38-1.03-.7-1.62-.94l-.36-2.54a.48.48 0 0 0-.48-.41h-3.84c-.24 0-.43.17-.47.41l-.36 2.54c-.59.24-1.130.57-1.62.94l-2.39-.96a.48.48 0 0 0-.59.22L2.74 8.87c-.12.21-.08.47.12.61l2.03 1.58c-.05.3-.09.63-.09.94s.02.64.07.94l-2.03 1.58a.49.49 0 0 0-.12.61l1.92 3.32c.12.22.37.29.59.22l2.39-.96c.5.38 1.03.7 1.62.94l.36 2.54c.05.24.24.41.48.41h3.84c.24 0 .44-.17.47-.41l.36-2.54c.59-.24 1.13-.56 1.62-.94l2.39.96c.22.08.47 0 .59-.22l1.920-3.32c.12-.22.07-.47-.12-.61l-2.01-1.58zM12 15.6c-1.98 0-3.6-1.62-3.6-3.6s1.62-3.6 3.6-3.6 3.6 1.62 3.6 3.6-1.62 3.6-3.6 3.6z"/></svg>
</div>
</body></html>
